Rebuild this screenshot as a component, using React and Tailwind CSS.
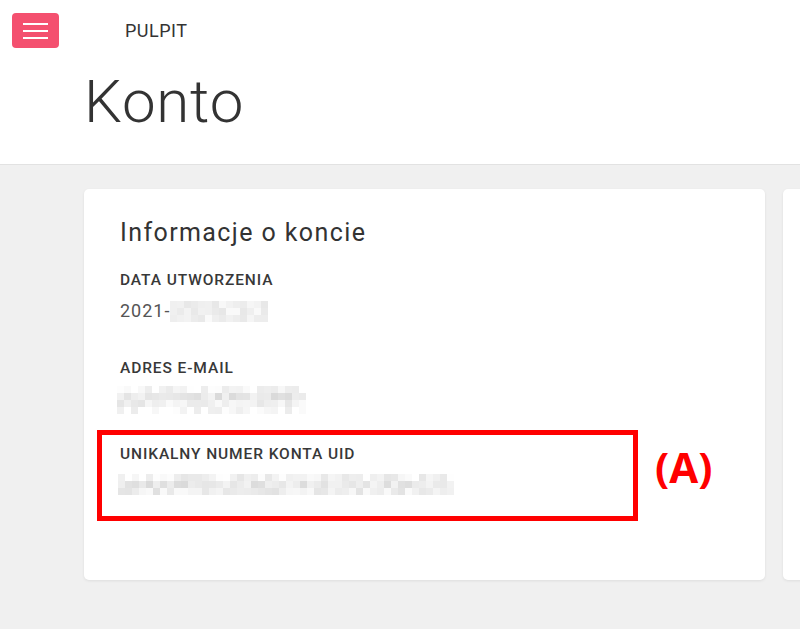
import React from "react";

function rng(seed) {
  let s = seed;
  return () => {
    s = (s * 9301 + 49297) % 233280;
    return s / 233280;
  };
}

function Mosaic({ cols, rows, cell = 7, seed = 1, min = 0xdc, max = 0xf8, rowBias = [] }) {
  const r = rng(seed);
  const rects = [];
  for (let y = 0; y < rows; y++) {
    for (let x = 0; x < cols; x++) {
      const bias = rowBias[y] || 0;
      let v = Math.round(min + r() * (max - min) + bias);
      v = Math.max(0, Math.min(255, v));
      const h = v.toString(16).padStart(2, "0");
      rects.push(
        <rect key={`${x}-${y}`} x={x * cell} y={y * cell} width={cell} height={cell} fill={`#${h}${h}${h}`} />
      );
    }
  }
  return (
    <svg width={cols * cell} height={rows * cell} shapeRendering="crispEdges" className="block">
      {rects}
    </svg>
  );
}

function Card({ children }) {
  return (
    <div className="relative shrink-0 w-[681px] h-[391px] bg-white rounded-[5px] shadow-[0_1px_3px_rgba(0,0,0,0.08)]">
      {children}
    </div>
  );
}

export default function App() {
  return (
    <div className="min-h-screen bg-[#f0f0f0] overflow-hidden" style={{ fontFamily: "Roboto, 'Liberation Sans', sans-serif" }}>
      <header className="bg-white h-[165px] border-b border-[#e2e2e2]">
        <div className="flex items-center pl-3 pt-[13px]">
          <button className="w-[47px] h-[35px] rounded-[4px] bg-[#f4506f] flex flex-col items-center justify-center gap-[5px]">
            <span className="block w-[25px] h-[2px] bg-white" />
            <span className="block w-[25px] h-[2px] bg-white" />
            <span className="block w-[25px] h-[2px] bg-white" />
          </button>
          <span className="ml-[66px] text-[18px] leading-[35px] tracking-[0.5px] text-[#333]">PULPIT</span>
        </div>
        <h1 className="mt-[24px] pl-[84px] text-[60px] leading-[60px] font-light tracking-[0.8px] text-[#333]">Konto</h1>
      </header>
      <main className="flex gap-[18px] pt-[24px] pl-[84px]">
        <Card>
          <div className="pt-[28px] px-[36px] text-[#333]">
            <h2 className="text-[25px] leading-[32px] font-normal tracking-[1.4px]">Informacje o koncie</h2>
            <div className="mt-[21px] text-[15.5px] leading-[20px] font-medium tracking-[0.9px] text-[#383838]">DATA UTWORZENIA</div>
            <div className="mt-[9px] flex items-center text-[18px] leading-[24px] tracking-[1px] text-[#555]">
              <span>2021-</span>
              <Mosaic cols={14} rows={3} seed={7} min={0xe6} max={0xfa} />
            </div>
            <div className="mt-[35px] text-[15.5px] leading-[20px] font-medium tracking-[0.9px] text-[#383838]">ADRES E-MAIL</div>
            <div className="mt-[8px] -ml-[3px]">
              <Mosaic cols={27} rows={4} cell={7} seed={13} min={0xdc} max={0xf6} rowBias={[14, -2, 6, 16]} />
            </div>
            <div className="mt-[30px] text-[15.5px] leading-[20px] font-medium tracking-[0.9px] text-[#383838]">UNIKALNY NUMER KONTA UID</div>
            <div className="mt-[10px] -ml-[2px]">
              <Mosaic cols={48} rows={3} cell={7} seed={29} min={0xdc} max={0xf6} rowBias={[10, -2, 4]} />
            </div>
          </div>
          <div className="absolute left-[13px] top-[241px] w-[541px] h-[91px] border-[5px] border-[#ff0000]" />
          <div
            className="absolute left-[571px] top-[257px] text-[42px] leading-[42px] font-bold text-[#ff0000]"
            style={{ fontFamily: "'Open Sans', 'Noto Sans', sans-serif" }}
          >
            (A)
          </div>
        </Card>
        <Card />
      </main>
    </div>
  );
}
